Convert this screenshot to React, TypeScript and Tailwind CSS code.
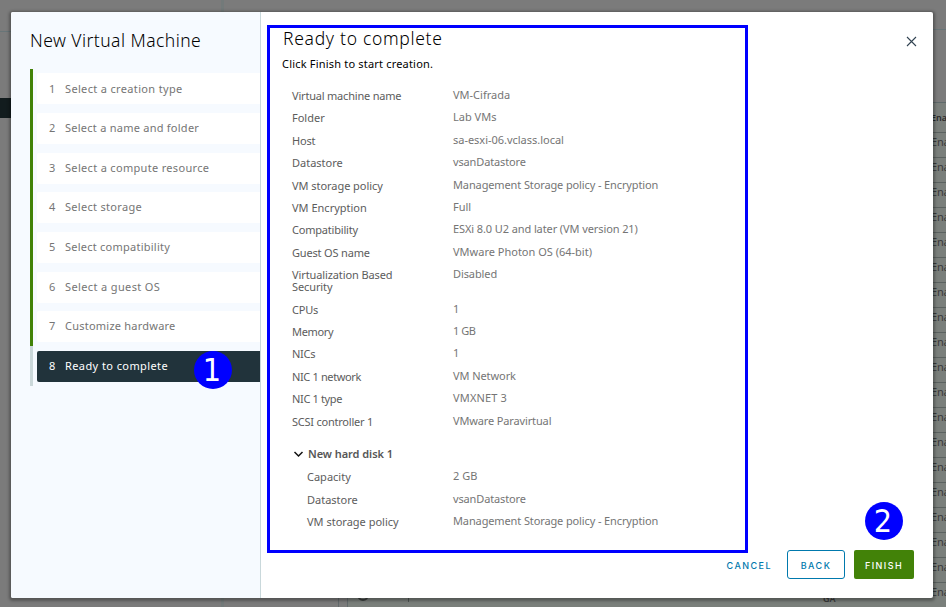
import React from "react";

const steps = [
  { label: "Select a creation type", track: "tracking-[0.34px]" },
  { label: "Select a name and folder", track: "tracking-[0.25px]" },
  { label: "Select a compute resource", track: "tracking-[0.32px]" },
  { label: "Select storage", track: "tracking-[0.3px]" },
  { label: "Select compatibility", track: "tracking-[0.24px]" },
  { label: "Select a guest OS", track: "tracking-[0.37px]" },
  { label: "Customize hardware", track: "tracking-[0.23px]" },
];

type Item = { label: string; value: string; lt?: string; vt?: string };

const summary: Item[] = [
  { label: "Virtual machine name", value: "VM-Cifrada", lt: "tracking-[-0.2px]" },
  { label: "Folder", value: "Lab VMs" },
  { label: "Host", value: "sa-esxi-06.vclass.local", lt: "tracking-[-0.15px]", vt: "tracking-[-0.02px]" },
  { label: "Datastore", value: "vsanDatastore", vt: "tracking-[-0.14px]" },
  { label: "VM storage policy", value: "Management Storage policy - Encryption", lt: "tracking-[-0.05px]", vt: "tracking-[-0.12px]" },
  { label: "VM Encryption", value: "Full" },
  { label: "Compatibility", value: "ESXi 8.0 U2 and later (VM version 21)", lt: "tracking-[-0.2px]", vt: "tracking-[-0.1px]" },
  { label: "Guest OS name", value: "VMware Photon OS (64-bit)", lt: "tracking-[-0.17px]" },
  { label: "Virtualization Based Security", value: "Disabled", lt: "tracking-[-0.11px]", vt: "tracking-[-0.1px]" },
  { label: "CPUs", value: "1", lt: "tracking-[-0.2px]" },
  { label: "Memory", value: "1 GB", lt: "tracking-[-0.35px]", vt: "tracking-[-0.5px]" },
  { label: "NICs", value: "1", lt: "tracking-[-0.3px]" },
  { label: "NIC 1 network", value: "VM Network", lt: "tracking-[-0.36px]", vt: "tracking-[-0.08px]" },
  { label: "NIC 1 type", value: "VMXNET 3", lt: "tracking-[-0.35px]", vt: "tracking-[0.15px]" },
  { label: "SCSI controller 1", value: "VMware Paravirtual", lt: "tracking-[-0.23px]", vt: "tracking-[-0.14px]" },
];

const disk: Item[] = [
  { label: "Capacity", value: "2 GB" },
  { label: "Datastore", value: "vsanDatastore", vt: "tracking-[-0.14px]" },
  { label: "VM storage policy", value: "Management Storage policy - Encryption", vt: "tracking-[-0.12px]" },
];

function Row({ item, nested }: { item: Item; nested?: boolean }) {
  return (
    <div className="flex pb-[10.42px] text-[11px] leading-[12px]">
      <div className={`${nested ? "w-[146px]" : "w-[161px] pr-10"} text-[#5c5c5c] ${item.lt ?? ""}`}>{item.label}</div>
      <div className={`-mt-px whitespace-nowrap text-[#757575] ${item.vt ?? ""}`}>{item.value}</div>
    </div>
  );
}

function Backdrop() {
  return (
    <div className="absolute inset-0 flex bg-[#7b7b7b]">
      <div className="flex w-[221px] shrink-0 flex-col">
        <div className="h-[32px] border-b border-[#687578]" />
        <div className="h-[66px]" />
        <div className="h-5 bg-[#121c1e]" />
      </div>
      <div className="w-[3px] shrink-0 bg-[#737a7a]" />
      <div className="flex w-[123px] shrink-0 flex-col justify-end">
        <div className="h-[30px] w-[115px] border-r border-[#626a6c]" />
      </div>
      <div className="flex w-[599px] shrink-0 flex-col">
        <div className="h-[30px] shrink-0 border-b border-[#687578]" />
        <div className="h-[73px] shrink-0 border-b border-[#5e696a]" />
        <div className="h-[30px] shrink-0 border-b border-[#5b6260] bg-[#7a7f7b] pl-[584px] pt-[9px] text-[9px] font-semibold leading-[12px] text-[#2b2b2b]">Ena</div>
        {Array.from({ length: 18 }, (_, i) => (
          <div key={i} className="h-[25px] shrink-0 border-b border-[#5b6260] bg-[#7a7f7b] pl-[584px] pt-[3px] text-[11px] leading-[12px] tracking-[-0.2px] text-[#3a3a3a]">Ena</div>
        ))}
        <div className="flex h-[25px] shrink-0 border-l border-[#626a6c] bg-[#7a7f7b] text-[#3a3a3a]">
          <div className="flex h-[19px] w-[61px] shrink-0 items-end justify-center border-r border-[#4f5654] pr-[30px]">
            <div className="mb-px size-3 rounded-full border-2 border-[#3a3f3d]" />
          </div>
          <div className="w-[414px] shrink-0" />
          <div className="w-[108px] shrink-0 pt-[10px] text-[9px] font-semibold leading-[12px]">GA</div>
          <div className="pt-[3px] text-[11px] leading-[12px] tracking-[-0.2px]">Ena</div>
        </div>
        <div className="h-[15px] shrink-0 border-l border-[#626a6c] bg-[#7a7f7b]" />
      </div>
    </div>
  );
}

function Badge({ children, className }: { children: React.ReactNode; className: string }) {
  return (
    <div className={`absolute flex size-[38px] items-center justify-center rounded-full bg-[#0000ff] pr-[2px] font-['DejaVu_Sans_Condensed','DejaVu_Sans'] text-[32px] leading-none text-white ${className}`}>
      {children}
    </div>
  );
}

export default function App() {
  return (
    <div className="relative h-[607px] w-[946px] overflow-hidden font-['Noto_Sans',sans-serif]">
      <Backdrop />
      <div className="absolute left-[11px] top-3 flex h-[586px] w-[922px] overflow-hidden rounded-[2px] bg-white shadow-[0_1px_3px_2px_rgba(0,0,0,0.3)]">
        <aside className="w-[250px] shrink-0 border-r border-[#c9d8db] bg-[#f6faff] pl-[19px]">
          <h1 className="h-[57px] pt-[16px] text-[17.5px] font-light leading-[24px] tracking-[0.45px] text-black">New Virtual Machine</h1>
          <ol className="text-[11px]">
            {steps.map((s, i) => (
              <li key={s.label} className="flex h-[39.65px] items-center border-l-[3px] border-[#428208] pl-1">
                <div className="flex h-[31px] flex-1 items-center rounded-l-[2px] bg-white pl-3 text-[#757575]">
                  <span className="w-4">{i + 1}</span>
                  <span className={s.track}>{s.label}</span>
                </div>
              </li>
            ))}
            <li className="flex h-[39.7px] items-center border-l-[3px] border-[#cbd8da] pl-1">
              <div className="flex h-[31px] flex-1 items-center rounded-l-[2px] bg-[#21333b] pl-3 text-white">
                <span className="w-4">8</span>
                <span className="tracking-[0.41px]">Ready to complete</span>
              </div>
            </li>
          </ol>
        </aside>
        <main className="flex flex-1 flex-col pl-[6px] pt-[13px]">
          <section className="h-[528px] w-[481px] border-[3px] border-[#0000ff] pl-3">
            <h2 className="pl-px text-[17.5px] font-light leading-[20px] tracking-[0.7px] text-black">Ready to complete</h2>
            <p className="pt-[9px] text-[11px] leading-[14px] tracking-[0.19px] text-black">Click Finish to start creation.</p>
            <div className="pl-[10px] pt-[19px]">
              {summary.map((item) => <Row key={item.label} item={item} />)}
              <div className="flex items-center pb-[11px] pl-[1px] pt-[10px] text-[11px] font-semibold leading-[12px] text-[#565656]">
                <svg className="mr-1 h-3 w-[11px]" viewBox="0 0 11 12" fill="none" stroke="#111" strokeWidth="1.5"><path d="M1.5 4 5.5 8l4-4" /></svg>
                <span className="tracking-[-0.05px]">New hard disk 1</span>
              </div>
              <div className="pl-[15px]">
                {disk.map((item) => <Row key={item.label} item={item} nested />)}
              </div>
            </div>
          </section>
        </main>
        <button className="absolute right-[16px] top-[24px]" aria-label="Close">
          <svg className="size-[11px]" viewBox="0 0 11 11" fill="none" stroke="#314351" strokeWidth="1.1"><path d="m1 1 9 9M10 1l-9 9" /></svg>
        </button>
        <footer className="absolute bottom-[19px] right-[19px] flex h-[29px] items-center font-[Inter,sans-serif] text-[9px] font-medium tracking-[1.45px]">
          <button className="mr-[15px] pt-[2px] text-[#0079ad]">CANCEL</button>
          <button className="mr-[9px] h-[29px] w-[58px] rounded-[3px] border border-[#0079ad] pt-[2px] text-[#0079ad]">BACK</button>
          <button className="h-[29px] w-[60px] rounded-[2px] bg-[#428208] pt-[2px] text-white">FINISH</button>
        </footer>
      </div>
      <Badge className="left-[194px] top-[351px]">1</Badge>
      <Badge className="left-[865px] top-[502px]">2</Badge>
    </div>
  );
}
